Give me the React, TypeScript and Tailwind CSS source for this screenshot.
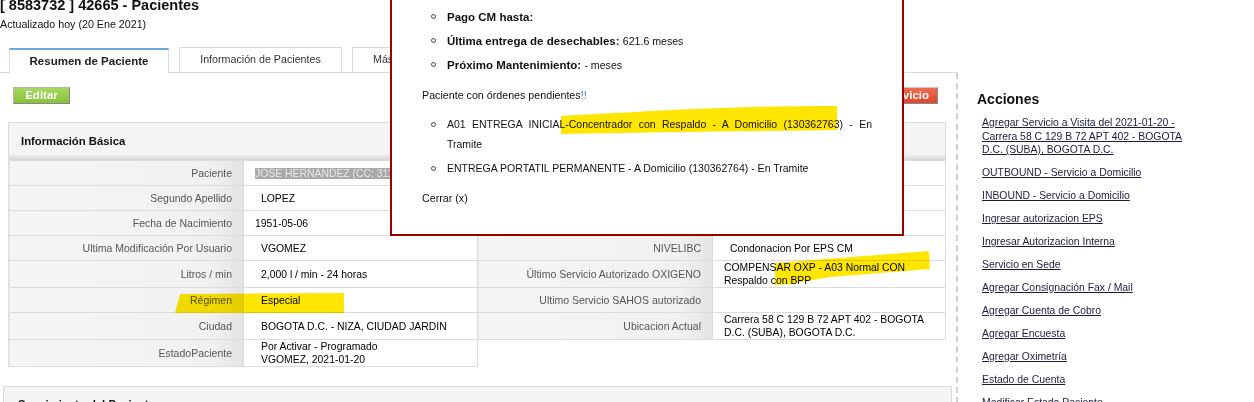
import React from "react";

const LABEL =
  "border border-[#dcdcdc] text-right pr-[11px] text-[10.5px] text-[#555] leading-[13px] py-0 bg-[linear-gradient(to_right,#f5f5f5_0%,#f1f1f1_86%,#e3e3e3_100%)]";
const VAL = "border border-[#dcdcdc] text-[10.4px] text-black leading-[13px] py-0 pr-[6px] bg-white";

function Bullet({ top }: { top: string }) {
  return <span className={`shrink-0 ml-[9px] mr-[11px] w-[5px] h-[5px] rounded-full border border-[#444] ${top}`} />;
}

export default function App() {
  const links = [
    "OUTBOUND - Servicio a Domicilio",
    "INBOUND - Servicio a Domicilio",
    "Ingresar autorizacion EPS",
    "Ingresar Autorizacion Interna",
    "Servicio en Sede",
    "Agregar Consignación Fax / Mail",
    "Agregar Cuenta de Cobro",
    "Agregar Encuesta",
    "Agregar Oximetría",
    "Estado de Cuenta",
    "Modificar Estado Paciente",
  ];
  return (
    <div className="relative w-[1254px] h-[402px] overflow-hidden bg-white text-black font-['Liberation_Sans',Arial,sans-serif]">
      <h1 className="-mt-[3px] text-[14.5px] font-bold leading-[17px] text-[#111]">[ 8583732 ] 42665 - Pacientes</h1>
      <div className="mt-[4px] text-[10.7px] leading-[13px] text-[#111]">Actualizado hoy (20 Ene 2021)</div>

      <div className="mt-[16px] flex">
        <div className="w-[958px] shrink-0">
          {/* tabs */}
          <div className="flex items-end h-[26px] border-b border-[#dcdcdc] pl-[9px] gap-[10px]">
            <div className="-mb-px h-[25px] w-[160px] border-t-2 border-x border-t-[#6ea7dd] border-x-[#dcdcdc] bg-white flex items-center justify-center text-[11.5px] font-bold text-[#222]">
              Resumen de Paciente
            </div>
            <div className="-mb-px h-[26px] w-[163px] border border-[#dcdcdc] bg-white flex items-center justify-center text-[10.7px] text-[#333] pb-px">
              Información de Pacientes
            </div>
            <div className="-mb-px h-[26px] w-[163px] border border-[#dcdcdc] bg-white flex items-center pl-[20px] text-[10.7px] text-[#333] pb-px">
              Más Información
            </div>
          </div>

          {/* content */}
          <div className="border-r-2 border-dashed border-[#cfcfcf] pt-[14px] h-[330px]">
            <div className="flex justify-between pl-[13px] pr-[18px]">
              <button className="h-[17px] w-[57px] border border-[#b5b5b5] border-r-[#888] border-b-[#888] bg-[linear-gradient(#a8d860,#84c236)] text-white text-[11.5px] font-bold leading-[15px]">
                Editar
              </button>
              <button className="h-[17px] px-[8px] border border-[#c9c9c9] border-r-[#888] border-b-[#888] bg-[linear-gradient(#ee6b4d,#da4a2c)] text-white text-[11.5px] font-bold leading-[15px]">
                Agregar Servicio
              </button>
            </div>

            <div className="mt-[18px] ml-[8px] mr-[10px]">
              <div className="h-[38px] border border-b-0 border-[#dcdcdc] bg-[linear-gradient(to_bottom,#f6f6f6_0%,#f4f4f4_84%,#e0e0e0_94%,#d6d6d6_100%)] flex items-center pl-[12px] text-[11.3px] font-bold text-[#111]">
                Información Básica
              </div>
              <table className="w-full border-collapse table-fixed">
                <colgroup>
                  <col className="w-[235px]" />
                  <col className="w-[234px]" />
                  <col className="w-[235px]" />
                  <col />
                </colgroup>
                <tbody>
                  <tr className="h-[25px]">
                    <td className={LABEL}>Paciente</td>
                    <td className={`${VAL} pl-[11px]`}>
                      <span className="bg-[#a9a9a9] text-[#e9e9e9] whitespace-nowrap">JOSE HERNANDEZ (CC: 3110458722)</span>
                    </td>
                    <td className={LABEL}>EPS</td>
                    <td className={`${VAL} pl-[11px]`}>COMPENSAR</td>
                  </tr>
                  <tr className="h-[25px]">
                    <td className={LABEL}>Segundo Apellido</td>
                    <td className={`${VAL} pl-[17px]`}>LOPEZ</td>
                    <td className={LABEL}>Tipo de Afiliación</td>
                    <td className={`${VAL} pl-[11px]`}>Cotizante</td>
                  </tr>
                  <tr className="h-[25px]">
                    <td className={LABEL}>Fecha de Nacimiento</td>
                    <td className={`${VAL} pl-[11px]`}>1951-05-06</td>
                    <td className={LABEL}>Sede</td>
                    <td className={`${VAL} pl-[11px]`}>BOGOTA</td>
                  </tr>
                  <tr className="h-[25px]">
                    <td className={LABEL}>Ultima Modificación Por Usuario</td>
                    <td className={`${VAL} pl-[17px]`}>VGOMEZ</td>
                    <td className={LABEL}>NIVELIBC</td>
                    <td className={`${VAL} pl-[17px]`}>Condonacion Por EPS CM</td>
                  </tr>
                  <tr className="h-[26px]">
                    <td className={LABEL}>Litros / min</td>
                    <td className={`${VAL} pl-[17px]`}>2,000 l / min - 24 horas</td>
                    <td className={LABEL}>Último Servicio Autorizado OXIGENO</td>
                    <td className={`${VAL} pl-[11px]`}>COMPENSAR OXP - A03 Normal CON Respaldo con BPP</td>
                  </tr>
                  <tr className="h-[25px]">
                    <td className={LABEL}>Régimen</td>
                    <td className={`${VAL} pl-[17px]`}>Especial</td>
                    <td className={LABEL}>Ultimo Servicio SAHOS autorizado</td>
                    <td className={VAL}></td>
                  </tr>
                  <tr className="h-[27px]">
                    <td className={LABEL}>Ciudad</td>
                    <td className={`${VAL} pl-[17px]`}>BOGOTA D.C. - NIZA, CIUDAD JARDIN</td>
                    <td className={LABEL}>Ubicacion Actual</td>
                    <td className={`${VAL} pl-[11px]`}>Carrera 58 C 129 B 72 APT 402 - BOGOTA D.C. (SUBA), BOGOTA D.C.</td>
                  </tr>
                  <tr className="h-[27px]">
                    <td className={LABEL}>EstadoPaciente</td>
                    <td className={`${VAL} pl-[17px] leading-[11.5px]`}>
                      Por Activar - Programado
                      <br />
                      VGOMEZ, 2021-01-20
                    </td>
                    <td colSpan={2} className="border-0"></td>
                  </tr>
                </tbody>
              </table>
            </div>

            <div className="mt-[19px] ml-[3px] mr-[4px] h-[40px] border border-[#dcdcdc] bg-[#f5f5f5] pl-[14px] pt-[10px] text-[11.3px] font-bold leading-[14px] text-[#111]">
              Seguimiento del Paciente
            </div>
          </div>
        </div>

        {/* sidebar */}
        <aside className="pl-[19px] pt-[44px]">
          <h2 className="text-[14px] font-bold leading-[17px] text-[#111]">Acciones</h2>
          <ul className="mt-[8px] pl-[5px] space-y-[9.5px] text-[10.4px] leading-[13.5px]">
            <li className="w-[214px]">
              <a className="underline text-[#1c1c3e]">
                Agregar Servicio a Visita del 2021-01-20 - Carrera 58 C 129 B 72 APT 402 - BOGOTA D.C. (SUBA), BOGOTA D.C.
              </a>
            </li>
            {links.map((l) => (
              <li key={l}>
                <a className="underline text-[#1c1c3e]">{l}</a>
              </li>
            ))}
          </ul>
        </aside>
      </div>

      {/* modal */}
      <div className="absolute left-[390px] top-0 w-[514px] border-2 border-t-0 border-[#9a0000] bg-white pl-[30px] pr-[30px] pt-[5px] pb-[26px] text-[#111]">
        <ul>
          <li className="flex h-[24px] leading-[24px] text-[11.5px]">
            <Bullet top="mt-[9px]" />
            <b>Pago CM hasta:</b>
          </li>
          <li className="flex h-[24px] leading-[24px] text-[11.5px]">
            <Bullet top="mt-[9px]" />
            <span>
              <b>Última entrega de desechables:</b> <span className="text-[10.6px]">621.6 meses</span>
            </span>
          </li>
          <li className="flex h-[24px] leading-[24px] text-[11.5px]">
            <Bullet top="mt-[9px]" />
            <span>
              <b>Próximo Mantenimiento:</b> <span className="text-[10.6px]">- meses</span>
            </span>
          </li>
        </ul>
        <p className="mt-[8px] text-[10.7px] leading-[20px]">
          Paciente con órdenes pendientes<span className="text-[#4a6fb5]">!!</span>
        </p>
        <ul className="mt-[9px] text-[10.5px] leading-[20px]">
          <li className="flex">
            <Bullet top="mt-[7.5px]" />
            <span className="w-[427px] text-justify">
              A01 ENTREGA INICIAL-Concentrador con Respaldo - A Domicilio (130362763) - En Tramite
            </span>
          </li>
          <li className="flex mt-[4px]">
            <Bullet top="mt-[7.5px]" />
            <span>ENTREGA PORTATIL PERMANENTE - A Domicilio (130362764) - En Tramite</span>
          </li>
        </ul>
        <p className="mt-[10px] text-[10.7px] leading-[20px]">Cerrar (x)</p>
      </div>

      {/* marker highlights */}
      <svg className="absolute left-0 top-0 pointer-events-none mix-blend-multiply" width="1254" height="402" viewBox="0 0 1254 402">
        <path d="M180 294 L344 293 L344 313 L175 313 Z" fill="#ffe600" />
        <path d="M561 116 C640 112 720 106 837 106 L837 130 C760 131 650 132 561 134 Z" fill="#ffe600" />
        <path d="M775 263 L929 251 L930 269 L830 277 L790 284 L775 285 Z" fill="#ffe600" />
      </svg>
    </div>
  );
}
